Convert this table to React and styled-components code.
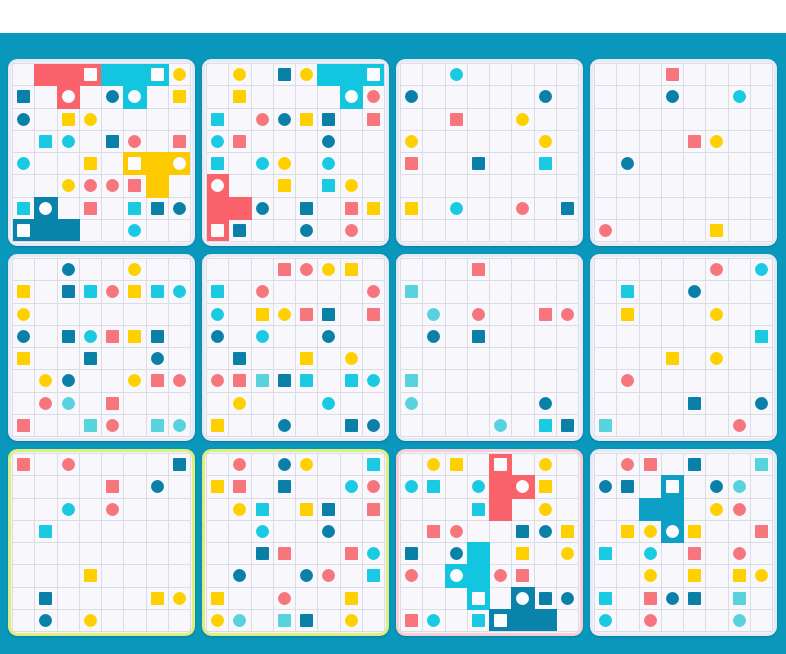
import React from 'react';
import styled, { createGlobalStyle } from 'styled-components';

const GlobalStyle = createGlobalStyle`
  html, body {
    margin: 0;
    padding: 0;
    background: #0a97bc;
    font-family: "Liberation Sans", Arial, sans-serif;
  }
`;

// colour keys used in the card maps
const colors = {
  r: '#f7767e',
  y: '#fed000',
  c: '#1acae2',
  d: '#0a80a9',
  l: '#58d2dc',
  R: '#fa636b',
  Y: '#fdc900',
  C: '#12c6df',
  D: '#0a83ab',
  B: '#0e9fc6',
};

const borders = {
  plain: '#e8eaf3',
  lime: '#dcee7c',
  pink: '#f5cfd4',
};

const cards = [
  {
    rows: [
      '.. R. R. Rs C. C. Cs yo',
      'ds .. Ro .. do Co .. ys',
      'do .. ys yo .. .. .. ..',
      '.. cs co .. ds ro .. rs',
      'co .. .. ys .. Ys Y. Yo',
      '.. .. yo ro ro rs Y. ..',
      'cs Do .. rs .. cs ds do',
      'Ds D. D. .. .. co .. ..',
    ],
  },
  {
    rows: [
      '.. yo .. ds yo C. C. Cs',
      '.. ys .. .. .. .. Co ro',
      'cs .. ro do ys ds .. rs',
      'co rs .. .. .. do .. ..',
      'cs .. co yo .. co .. ..',
      'Ro .. .. ys .. cs yo ..',
      'R. R. do .. ds .. rs ys',
      'Rs ds .. .. do .. ro ..',
    ],
  },
  {
    rows: [
      '.. .. co .. .. .. .. ..',
      'do .. .. .. .. .. do ..',
      '.. .. rs .. .. yo .. ..',
      'yo .. .. .. .. .. yo ..',
      'rs .. .. ds .. .. cs ..',
      '.. .. .. .. .. .. .. ..',
      'ys .. co .. .. ro .. ds',
      '.. .. .. .. .. .. .. ..',
    ],
  },
  {
    rows: [
      '.. .. .. rs .. .. .. ..',
      '.. .. .. do .. .. co ..',
      '.. .. .. .. .. .. .. ..',
      '.. .. .. .. rs yo .. ..',
      '.. do .. .. .. .. .. ..',
      '.. .. .. .. .. .. .. ..',
      '.. .. .. .. .. .. .. ..',
      'ro .. .. .. .. ys .. ..',
    ],
  },
  {
    rows: [
      '.. .. do .. .. yo .. ..',
      'ys .. ds cs ro ys cs co',
      'yo .. .. .. .. .. .. ..',
      'do .. ds co rs ys ds ..',
      'ys .. .. ds .. .. do ..',
      '.. yo do .. .. yo rs ro',
      '.. ro lo .. rs .. .. ..',
      'rs .. .. ls ro .. ls lo',
    ],
  },
  {
    rows: [
      '.. .. .. rs ro yo ys ..',
      'cs .. ro .. .. .. .. ro',
      'co .. ys yo rs ds .. rs',
      'do .. co .. .. do .. ..',
      '.. ds .. .. ys .. yo ..',
      'ro rs ls ds cs .. cs co',
      '.. yo .. .. .. co .. ..',
      'ys .. .. do .. .. ds do',
    ],
  },
  {
    rows: [
      '.. .. .. rs .. .. .. ..',
      'ls .. .. .. .. .. .. ..',
      '.. lo .. ro .. .. rs ro',
      '.. do .. ds .. .. .. ..',
      '.. .. .. .. .. .. .. ..',
      'ls .. .. .. .. .. .. ..',
      'lo .. .. .. .. .. do ..',
      '.. .. .. .. lo .. cs ds',
    ],
  },
  {
    rows: [
      '.. .. .. .. .. ro .. co',
      '.. cs .. .. do .. .. ..',
      '.. ys .. .. .. yo .. ..',
      '.. .. .. .. .. .. .. cs',
      '.. .. .. ys .. yo .. ..',
      '.. ro .. .. .. .. .. ..',
      '.. .. .. .. ds .. .. do',
      'ls .. .. .. .. .. ro ..',
    ],
  },
  {
    border: 'lime',
    rows: [
      'rs .. ro .. .. .. .. ds',
      '.. .. .. .. rs .. do ..',
      '.. .. co .. ro .. .. ..',
      '.. cs .. .. .. .. .. ..',
      '.. .. .. .. .. .. .. ..',
      '.. .. .. ys .. .. .. ..',
      '.. ds .. .. .. .. ys yo',
      '.. do .. yo .. .. .. ..',
    ],
  },
  {
    border: 'lime',
    rows: [
      '.. ro .. do yo .. .. cs',
      'ys rs .. ds .. .. co ro',
      '.. yo cs .. ys ds .. rs',
      '.. .. co .. .. do .. ..',
      '.. .. ds rs .. .. rs co',
      '.. do .. .. do ro .. cs',
      'ys .. .. ro .. .. ys ..',
      'yo lo .. ls ds .. yo ..',
    ],
  },
  {
    border: 'pink',
    rows: [
      '.. yo ys .. Rs .. yo ..',
      'co cs .. co R. Ro ys ..',
      '.. .. .. cs R. .. yo ..',
      '.. rs ro .. .. ds do ys',
      'ds .. do C. .. ys .. yo',
      'ro .. Co C. ro rs .. ..',
      '.. .. .. Cs .. Do ds do',
      'rs co .. cs Ds D. D. ..',
    ],
  },
  {
    rows: [
      '.. ro rs .. ds .. .. ls',
      'do ds .. Bs .. do lo ..',
      '.. .. B. B. .. yo ro ..',
      '.. ys yo Bo ys .. .. rs',
      'cs .. co .. rs .. ro ..',
      '.. .. yo .. ys .. ys yo',
      'cs .. rs do ds .. ls ..',
      'co .. ro .. .. .. lo ..',
    ],
  },
];

const TopBand = styled.div`
  height: 33px;
  background: #ffffff;
`;

const Board = styled.div`
  display: grid;
  grid-template-columns: repeat(4, 187px);
  grid-auto-rows: 187px;
  column-gap: 7px;
  row-gap: 8px;
  padding: 26px 9px 16px 8px;
  background: #0a97bc;
`;

const Card = styled.div`
  box-sizing: border-box;
  border: 3px solid ${(p) => borders[p.$border] || borders.plain};
  border-radius: 9px;
  background: #f5f6fb;
  padding: 1px;
  box-shadow: 0 1px 2px rgba(0, 40, 70, 0.25);
  display: flex;
`;

const Grid = styled.div`
  flex: 1;
  display: grid;
  grid-template-columns: repeat(8, 1fr);
  grid-template-rows: repeat(8, 1fr);
  gap: 1px;
  border: 1px solid #dcdce7;
  background: #dcdce7;
  border-radius: 2px;
  overflow: hidden;
`;

const Cell = styled.div`
  display: flex;
  align-items: center;
  justify-content: center;
  background: ${(p) => p.$fill || '#f7f7fc'};
  box-shadow: ${(p) => (p.$fill ? `0 0 0 1px ${p.$fill}` : 'none')};
`;

const Mark = styled.span`
  width: 13px;
  height: 13px;
  border-radius: ${(p) => (p.$round ? '50%' : '1px')};
  background: ${(p) => p.$color};
`;

const GridCell = ({ token }) => {
  const [key, shape] = token;
  if (key === '.') return <Cell />;
  const isFill = key === key.toUpperCase();
  if (isFill) {
    return (
      <Cell $fill={colors[key]}>
        {shape !== '.' && <Mark $round={shape === 'o'} $color="#fbfbfe" />}
      </Cell>
    );
  }
  return (
    <Cell>
      <Mark $round={shape === 'o'} $color={colors[key]} />
    </Cell>
  );
};

const PuzzleCard = ({ card }) => (
  <Card $border={card.border}>
    <Grid>
      {card.rows.flatMap((row, r) =>
        row.split(' ').map((token, c) => <GridCell key={`${r}-${c}`} token={token} />)
      )}
    </Grid>
  </Card>
);

export default function App() {
  return (
    <>
      <GlobalStyle />
      <TopBand />
      <Board>
        {cards.map((card, i) => (
          <PuzzleCard key={i} card={card} />
        ))}
      </Board>
    </>
  );
}
